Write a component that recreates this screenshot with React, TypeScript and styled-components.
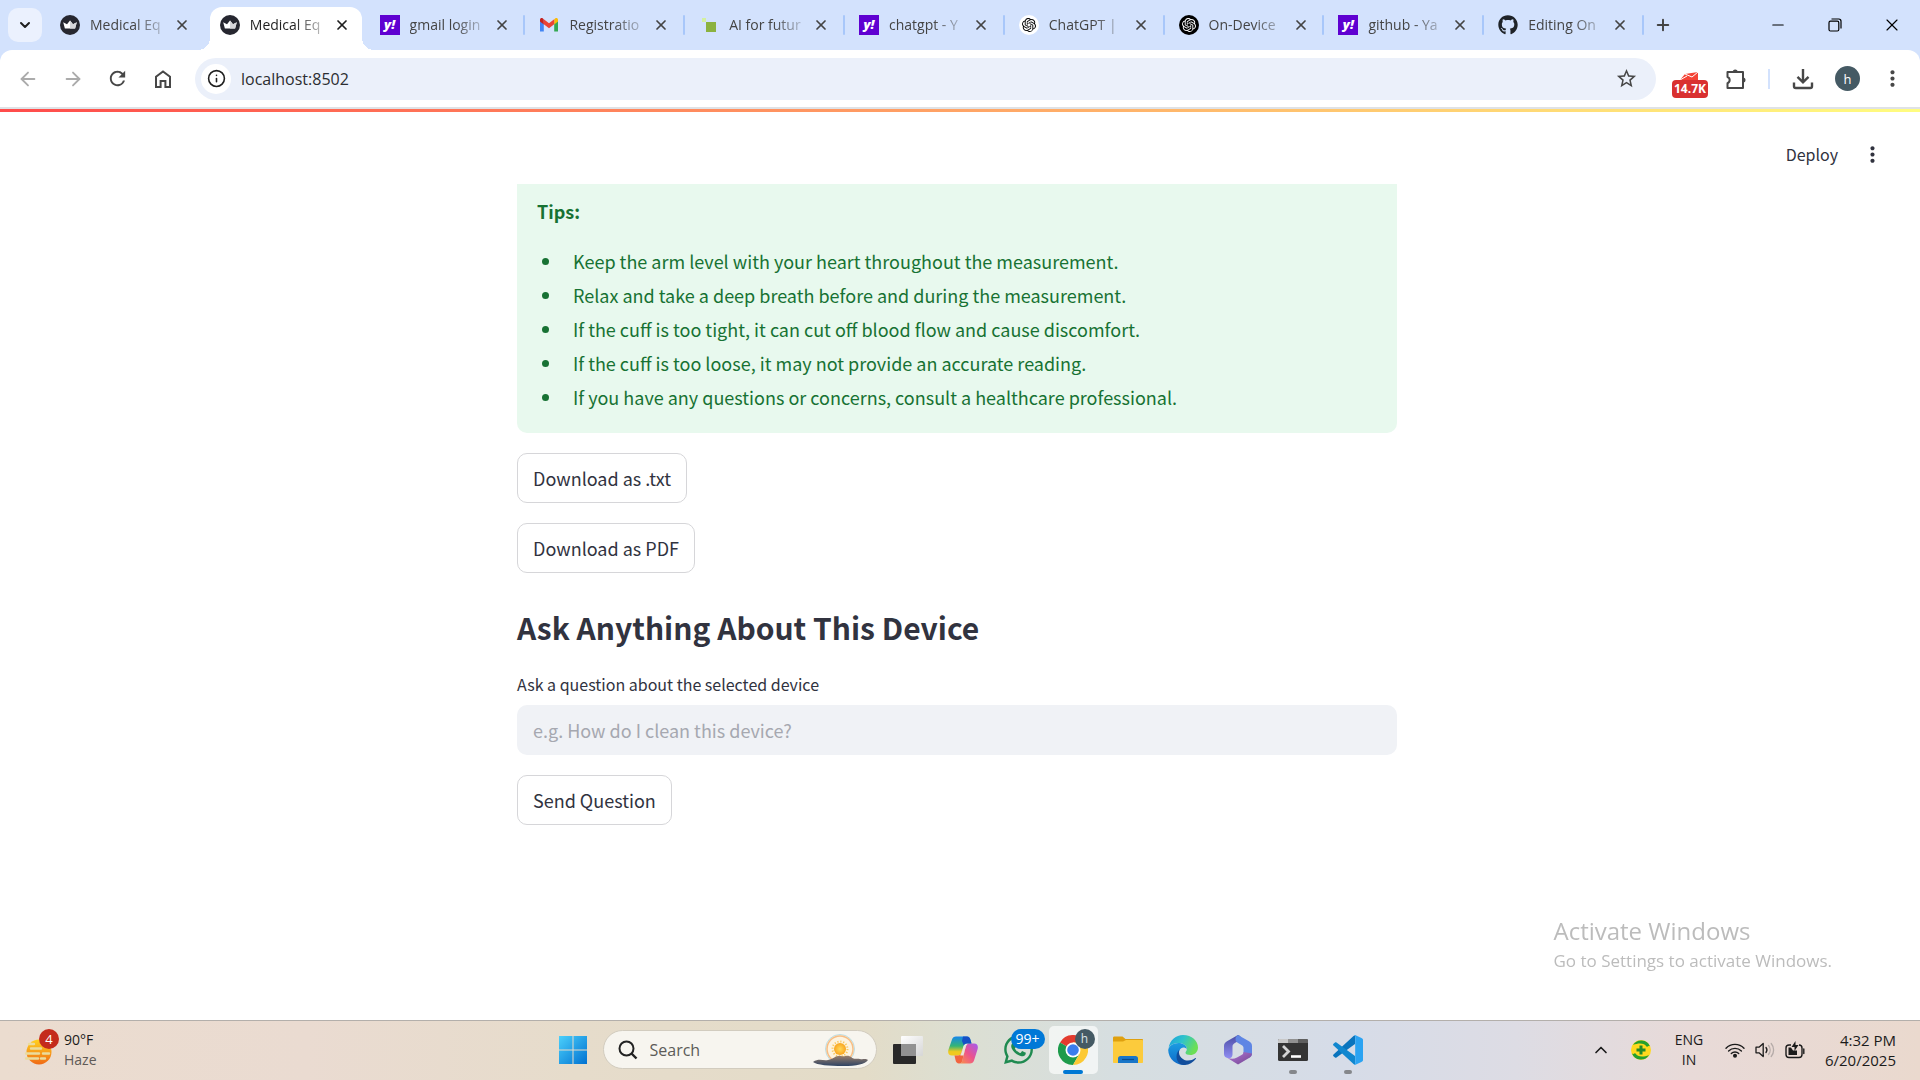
import React from "react";
import styled, { createGlobalStyle, css } from "styled-components";
import { FaGithub, FaWhatsapp } from "react-icons/fa";
import { SiOpenai } from "react-icons/si";
import { ArrowLeft, ArrowRight, ChevronDown, ChevronUp, Info, Minus, Plus, X } from "lucide-react";
import { MdMoreVert, MdRefresh, MdStarBorder } from "react-icons/md";

const systemFont = '"Open Sans", "Noto Sans", sans-serif';
const pageFont = '"Noto Sans CJK SC", "Noto Sans", sans-serif';

const GlobalStyle = createGlobalStyle`
  *, *::before, *::after { box-sizing: border-box; }
  body { margin: 0; background: #fff; }
  button, input { font: inherit; color: inherit; }
  button { border: 0; padding: 0; background: none; cursor: pointer; }
  svg { display: block; flex: none; }
`;

const Screen = styled.div`
  display: flex;
  flex-direction: column;
  height: 100vh;
  overflow: hidden;
  font-family: ${systemFont};
`;

/* ---------- Browser window ---------- */

const TabStrip = styled.header`
  display: flex;
  align-items: center;
  height: 50px;
  flex: none;
  padding-left: 8px;
  background: #d3e2fd;
  color: #444;
`;

const TabSearch = styled.button`
  display: grid;
  place-items: center;
  width: 34px;
  height: 34px;
  margin-right: 8px;
  border-radius: 10px;
  background: #ebf1fe;
  color: #1f1f1f;
`;

const Tabs = styled.nav`
  display: flex;
  flex: 0 1 1598px;
  min-width: 0;
  height: 50px;
  padding-top: 7px;
`;

const TabSlot = styled.div<{ $divider: boolean }>`
  flex: 1;
  display: flex;
  align-items: center;
  min-width: 0;
  padding-right: 4px;
  ${(p) =>
    p.$divider &&
    css`
      &::after {
        content: "";
        width: 2px;
        height: 20px;
        margin-left: auto;
        margin-bottom: 7px;
        border-radius: 1px;
        background: #a8c7fa;
      }
    `}
`;

const TabBody = styled.div<{ $active: boolean }>`
  position: relative;
  display: flex;
  align-items: center;
  flex: 0 1 152px;
  min-width: 0;
  height: 43px;
  padding: 0 10px 7px;
  border-radius: 12px 12px 0 0;
  ${(p) =>
    p.$active &&
    css`
      background: #fff;
      color: #1f1f1f;
      &::before,
      &::after {
        content: "";
        position: absolute;
        bottom: 0;
        width: 12px;
        height: 12px;
      }
      &::before {
        right: 100%;
        background: radial-gradient(circle at 0 0, transparent 12px, #fff 12px);
      }
      &::after {
        left: 100%;
        background: radial-gradient(circle at 100% 0, transparent 12px, #fff 12px);
      }
    `}
`;

const TabLabel = styled.button`
  display: flex;
  align-items: center;
  gap: 10px;
  flex: 1;
  min-width: 0;
  font-size: 14px;
  line-height: 20px;
`;

const TabTitle = styled.span`
  flex: 1;
  white-space: nowrap;
  text-align: left;
  mask-image: linear-gradient(to right, #000 60%, rgba(0, 0, 0, 0.2));
`;

const CloseTab = styled.button`
  display: grid;
  place-items: center;
  flex: none;
  width: 20px;
  height: 20px;
  margin-left: 8px;
`;

const NewTab = styled.button`
  display: grid;
  place-items: center;
  width: 34px;
  height: 34px;
  margin-left: -2px;
`;

const WindowControls = styled.div`
  display: flex;
  margin-left: auto;
  color: #000;
`;

const WindowButton = styled.button`
  display: grid;
  place-items: center;
  width: 57px;
  height: 50px;
`;

const ToolbarBack = styled.div`
  flex: none;
  background: #d3e2fd;
`;

const Toolbar = styled.div`
  display: flex;
  align-items: center;
  height: 57px;
  padding: 0 5px;
  border-radius: 12px 12px 0 0;
  background: #fff;
  color: #474747;
`;

const ToolButton = styled.button<{ $dim?: boolean }>`
  display: grid;
  place-items: center;
  width: 45px;
  height: 42px;
  color: ${(p) => (p.$dim ? "#ababab" : "#474747")};
`;

const AddressBar = styled.form`
  display: flex;
  align-items: center;
  flex: 1;
  height: 42px;
  margin: 0 11px 0 10px;
  padding: 0 7px 0 6px;
  border-radius: 21px;
  background: #ebf0fa;
`;

const SiteInfo = styled.button`
  display: grid;
  place-items: center;
  width: 30px;
  height: 30px;
  border-radius: 50%;
  background: #fff;
  color: #1f1f1f;
`;

const AddressInput = styled.input`
  flex: 1;
  min-width: 0;
  height: 30px;
  border: 0;
  outline: 0;
  padding: 0 10px;
  background: transparent;
  color: #2b2d31;
  font-size: 16px;
`;

const ToolDivider = styled.span`
  width: 2px;
  height: 20px;
  margin: 0 10px;
  background: #d3e2fd;
`;

const ProfileDot = styled.span`
  display: grid;
  place-items: center;
  width: 25px;
  height: 25px;
  border-radius: 50%;
  background: #455a64;
  color: #fff;
  font-size: 13px;
  line-height: 24px;
`;

const MailExtension = styled.button`
  display: flex;
  flex-direction: column;
  align-items: center;
  width: 46px;
  padding-top: 12px;
`;

const MailCount = styled.span`
  width: 36px;
  height: 18px;
  border-radius: 4px;
  background: #d93030;
  color: #fff;
  font-size: 12px;
  font-weight: 700;
  line-height: 18px;
`;

/* ---------- Streamlit page ---------- */

const Page = styled.main`
  display: flex;
  flex-direction: column;
  flex: 1;
  min-height: 0;
  overflow: hidden;
  border-top: 2px solid #dfe2e6;
  background: #fff;
  color: #31333f;
  font-family: ${pageFont};
`;

const Decoration = styled.div`
  flex: none;
  height: 3px;
  background: linear-gradient(90deg, #ff4b4b, #fffd80);
`;

const PageHeader = styled.div`
  display: flex;
  justify-content: flex-end;
  align-items: center;
  gap: 22px;
  flex: none;
  height: 72px;
  padding: 12px 35px 0 0;
`;

const DeployButton = styled.button`
  font-size: 16px;
  line-height: 24px;
`;

const Column = styled.div`
  display: flex;
  flex-direction: column;
  align-items: flex-start;
  gap: 20px;
  width: 100%;
  max-width: 886px;
  margin: 0 auto;
  padding-right: 6px;
`;

const TipsBox = styled.section`
  width: 100%;
  padding: 11px 20px 19px;
  border-radius: 0 0 10px 10px;
  background: #e8f9ee;
  color: #177233;
  font-size: 18px;
  line-height: 34px;
`;

const TipsTitle = styled.p`
  margin: 0 0 17px;
  line-height: 32px;
  font-weight: 600;
`;

const TipsList = styled.ul`
  margin: 0;
  padding-left: 26px;
`;

const Tip = styled.li`
  padding-left: 10px;
`;

const PageButton = styled.button`
  height: 50px;
  padding: 0 15px;
  border: 1px solid #d6d6d9;
  border-radius: 10px;
  background: #fff;
  font-size: 18px;
  line-height: 32px;
`;

const Heading = styled.h2`
  margin: 9px 0 0;
  font-size: 30px;
  font-weight: 600;
  line-height: 50px;
`;

const Field = styled.div`
  width: 100%;
`;

const FieldLabel = styled.label`
  display: block;
  margin-bottom: 9px;
  font-size: 16px;
  line-height: 24px;
`;

const FieldInput = styled.input`
  display: block;
  width: 100%;
  height: 50px;
  padding: 0 16px;
  border: 0;
  border-radius: 10px;
  background: #f0f2f6;
  font-size: 18px;
  &::placeholder {
    color: #a6a8b0;
    opacity: 1;
  }
`;

const Watermark = styled.aside`
  position: fixed;
  right: 88px;
  bottom: 107px;
  color: #bcbcbc;
  font-size: 17px;
  line-height: 24px;
  pointer-events: none;
`;

const WatermarkTitle = styled.div`
  font-size: 24px;
  line-height: 36px;
`;

/* ---------- Taskbar ---------- */

const Taskbar = styled.footer`
  display: grid;
  grid-template-columns: 1fr auto 1fr;
  align-items: center;
  flex: none;
  height: 60px;
  padding-bottom: 2px;
  border-top: 1px solid #b3afab;
  background: linear-gradient(
    90deg,
    #ebdccf 0%,
    #eadbd1 16%,
    #e6dccb 30%,
    #e3dcc8 45%,
    #dcdfd2 50%,
    #d6dee0 58%,
    #d6dce8 70%,
    #dddce4 79%,
    #e8dad8 88%,
    #ead9ce 100%
  );
  color: #1b1b1b;
  font-size: 15px;
  line-height: 20px;
`;

const Weather = styled.button`
  display: flex;
  align-items: center;
  gap: 8px;
  padding-left: 24px;
  text-align: left;
`;

const WeatherIcon = styled.span`
  position: relative;
  width: 32px;
  height: 42px;
  padding-top: 10px;
`;

const WeatherBadge = styled.span`
  position: absolute;
  top: 0;
  left: 15px;
  width: 20px;
  height: 20px;
  border-radius: 50%;
  background: #c42b1c;
  color: #fff;
  font-size: 13px;
  line-height: 20px;
  text-align: center;
`;

const SmallText = styled.span`
  display: block;
  font-size: 14px;
`;

const MutedText = styled(SmallText)`
  color: #5f5a57;
`;

const ClockText = styled.span`
  display: block;
`;

const Apps = styled.div`
  display: flex;
  align-items: center;
  padding-left: 1px;
`;

const AppButton = styled.button<{ $active?: boolean }>`
  position: relative;
  display: grid;
  place-items: center;
  width: 49px;
  height: 48px;
  margin: 0 3px;
  border-radius: 5px;
  background: ${(p) => (p.$active ? "rgba(255, 255, 255, 0.65)" : "none")};
`;

const RunningMark = styled.span<{ $active?: boolean }>`
  position: absolute;
  bottom: 0;
  width: ${(p) => (p.$active ? 20 : 8)}px;
  height: 4px;
  border-radius: 2px;
  background: ${(p) => (p.$active ? "#0078d4" : "#85878b")};
`;

const CountBadge = styled.span`
  position: absolute;
  top: 3px;
  left: 17px;
  width: 34px;
  height: 20px;
  border-radius: 10px;
  background: #0078d7;
  color: #fff;
  font-size: 14px;
  line-height: 20px;
`;

const ProfileBadge = styled.span`
  position: absolute;
  top: 3px;
  right: 3px;
  width: 20px;
  height: 20px;
  border-radius: 50%;
  background: #455a64;
  color: #dde3e6;
  font-size: 12px;
  line-height: 19px;
`;

const SearchBox = styled.label`
  display: flex;
  align-items: center;
  gap: 12px;
  width: 274px;
  height: 39px;
  margin: 0 4px 0 2px;
  padding: 0 7px 0 14px;
  border: 1px solid #d2ccbf;
  border-radius: 20px;
  background: #f7f5ef;
`;

const SearchInput = styled.input`
  flex: 1;
  min-width: 0;
  border: 0;
  outline: 0;
  padding: 0;
  background: transparent;
  font-size: 16px;
  &::placeholder {
    color: #5c5b58;
    opacity: 1;
  }
`;

const Tray = styled.div`
  display: flex;
  align-items: center;
  justify-content: flex-end;
  padding-right: 24px;
`;

const TrayButton = styled.button<{ $width: number }>`
  display: grid;
  place-items: center;
  width: ${(p) => p.$width}px;
  height: 48px;
`;

const Clock = styled.button`
  width: 83px;
  text-align: right;
`;

/* ---------- Favicons ---------- */

const RoundIcon = styled.span<{ $dark?: boolean }>`
  display: grid;
  place-items: center;
  flex: none;
  width: 20px;
  height: 20px;
  border-radius: 50%;
  background: ${(p) => (p.$dark ? "#000" : "#fff")};
  color: ${(p) => (p.$dark ? "#fff" : "#000")};
`;

const YahooIcon = styled.span`
  flex: none;
  width: 20px;
  height: 20px;
  background: #5f01d1;
  color: #fff;
  font-size: 13px;
  font-style: italic;
  font-weight: 800;
  line-height: 18px;
  text-align: center;
`;

const Crown = () => (
  <svg width="20" height="20" viewBox="0 0 20 20">
    <circle cx="10" cy="10" r="10" fill="#262730" />
    <path d="M3.2 7.3 7 9.2 10 5.6l3 3.6 3.8-1.9-1.7 6.2H4.9z" fill="#fff" />
    <path d="m10 5.6 3 3.6 3.8-1.9-1.7 6.2H10z" fill="#d6d6da" />
  </svg>
);

const Gmail = () => (
  <svg width="20" height="20" viewBox="0 0 20 20">
    <path d="M1 5.5v11h3.8V8.8z" fill="#4285f4" />
    <path d="M19 5.5v11h-3.8V8.8z" fill="#34a853" />
    <path d="M15.2 4.4v5L19 6.6V5c0-1.9-1.8-2.4-2.9-1.5z" fill="#fbbc04" />
    <path d="M4.8 4.4v5L1 6.6V5c0-1.9 1.8-2.4 2.9-1.5z" fill="#c5221f" />
    <path d="M4.8 4.2 10 8.2l5.2-4v5.1L10 13.2 4.8 9.3z" fill="#ea4335" />
  </svg>
);

const GreenSquares = () => (
  <svg width="20" height="20" viewBox="0 0 20 20">
    <path d="M3 3h4v4H3z" fill="#d3f0a0" />
    <path d="M7 7h10v10H7z" fill="#8bb23f" />
  </svg>
);

type Site = "streamlit" | "yahoo" | "gmail" | "green" | "chatgpt" | "openai" | "github";

function Favicon({ site }: { site: Site }) {
  switch (site) {
    case "streamlit":
      return <Crown />;
    case "yahoo":
      return <YahooIcon>y!</YahooIcon>;
    case "gmail":
      return <Gmail />;
    case "green":
      return <GreenSquares />;
    case "chatgpt":
      return <RoundIcon><SiOpenai size={14} /></RoundIcon>;
    case "openai":
      return <RoundIcon $dark><SiOpenai size={14} /></RoundIcon>;
    default:
      return <FaGithub size={20} color="#1f2328" />;
  }
}

/* ---------- Toolbar and taskbar drawings ---------- */

const HomeIcon = () => (
  <svg width="18" height="20" viewBox="0 0 18 20" fill="none" stroke="currentColor" strokeWidth="2">
    <path d="M2 18V7.8L9 2.4l7 5.4V18h-4.6v-6H6.6v6z" />
  </svg>
);

const PuzzleIcon = () => (
  <svg width="22" height="22" viewBox="0 0 22 22" fill="none" stroke="currentColor" strokeWidth="2" strokeLinejoin="round">
    <path d="M2.500 4h15.500v16H2.500v-4.800a3.300 3.300 0 0 0 0-6.200z" />
    <path d="M7.700 4a2.500 2.500 0 0 1 5 0zM18 9.500a2.500 2.500 0 0 1 0 5z" fill="currentColor" stroke="none" />
  </svg>
);

const DownloadIcon = () => (
  <svg width="22" height="22" viewBox="0 0 22 22" fill="none" stroke="currentColor" strokeWidth="2.400">
    <path d="M11 1v13M5.500 8.800 11 14.300l5.500-5.500M2 14.500v3.700c0 1 .8 1.800 1.800 1.800h14.400c1 0 1.800-.8 1.800-1.800v-3.700" />
  </svg>
);

const MailIcon = () => (
  <svg width="20" height="8" viewBox="0 0 20 8">
    <path d="M5 2 18 0v8H0z" fill="#f44336" />
    <path d="m5 2 7 3 6-5M0 8l7-4" stroke="#fff" strokeWidth="1" fill="none" />
  </svg>
);

const RestoreIcon = () => (
  <svg width="14" height="14" viewBox="0 0 14 14" fill="none" stroke="currentColor" strokeWidth="1.200">
    <rect x="1" y="3.200" width="9.800" height="9.800" rx="1.500" />
    <path d="M3.500 1h7.300C12.200 1 13 2 13 3.200v7.300" />
  </svg>
);

const HazeIcon = () => (
  <svg width="28" height="26" viewBox="0 0 28 26">
    <defs>
      <linearGradient id="haze" x1="0" y1="0" x2="0" y2="1">
        <stop offset="0" stopColor="#ffd21f" />
        <stop offset="1" stopColor="#f06a16" />
      </linearGradient>
    </defs>
    <circle cx="15" cy="13" r="12.500" fill="url(#haze)" />
    <g stroke="#eadc9d" strokeWidth="2.400" strokeLinecap="round">
      <path d="M5 5h5M2 14.500h13M19 14.500h6M7 9.500h10M2 19.500h12M17 19.500h4" />
    </g>
  </svg>
);

const StartIcon = () => (
  <svg width="30" height="30" viewBox="0 0 30 30">
    <defs>
      <linearGradient id="start" x1="0" y1="0" x2="1" y2="1">
        <stop offset="0" stopColor="#4bd0fb" />
        <stop offset="1" stopColor="#0071d1" />
      </linearGradient>
    </defs>
    <path d="M1 1h13.500v13.500H1zM15.500 1H29v13.500H15.500zM1 15.500h13.500V29H1zM15.500 15.500H29V29H15.500z" fill="url(#start)" />
  </svg>
);

const SearchIcon = () => (
  <svg width="20" height="20" viewBox="0 0 20 20" fill="none" stroke="#222" strokeWidth="2">
    <circle cx="8.500" cy="8.500" r="7" />
    <path d="m13.500 13.500 5 5" strokeWidth="2.400" />
  </svg>
);

const SunriseArt = () => (
  <svg width="56" height="34" viewBox="0 0 56 34">
    <defs>
      <radialGradient id="sun">
        <stop offset="0" stopColor="#ffd95a" />
        <stop offset="1" stopColor="#f9a51f" />
      </radialGradient>
      <linearGradient id="hill" x1="0" y1="0" x2="0" y2="1">
        <stop offset="0" stopColor="#9a7f6b" />
        <stop offset="1" stopColor="#2f4464" />
      </linearGradient>
    </defs>
    <circle cx="27" cy="16" r="14.500" fill="#fdf3df" stroke="#b9dce4" />
    <circle cx="27" cy="16" r="13" fill="none" stroke="#f7bd85" strokeWidth="1.500" />
    <circle cx="27" cy="16" r="7.500" fill="none" stroke="#f8c95e" strokeWidth="2" strokeDasharray="1.200 1.750" />
    <circle cx="27" cy="16" r="6" fill="url(#sun)" />
    <path d="M0 29c6-4 10-1 15-2 6-1 8-5 13-4s6-2 10 1 5 1 9 2c3 1 5-1 8 1-3 4-11 6-25 6S4 32 0 29z" fill="url(#hill)" />
  </svg>
);

const TaskViewIcon = () => (
  <svg width="30" height="28" viewBox="0 0 30 28">
    <defs>
      <linearGradient id="pane" x1="0" y1="0" x2="1" y2="1">
        <stop offset="0" stopColor="#fff" />
        <stop offset="1" stopColor="#d6d6d6" />
      </linearGradient>
    </defs>
    <rect x="0" y="8" width="23" height="20" rx="1" fill="#292929" />
    <rect x="8" y="0" width="22" height="20" rx="1" fill="url(#pane)" />
    <path d="M8 8h15v12H8z" fill="#929292" />
  </svg>
);

const CopilotIcon = () => (
  <svg width="30" height="28" viewBox="0 0 30 28">
    <defs>
      <linearGradient id="copA" x1="0" y1="0" x2="0" y2="1">
        <stop offset="0" stopColor="#1686ec" />
        <stop offset=".5" stopColor="#34b575" />
        <stop offset=".8" stopColor="#f0ca1e" />
      </linearGradient>
      <linearGradient id="copB" x1="1" y1="0" x2="0" y2="1">
        <stop offset="0" stopColor="#a25bf2" />
        <stop offset=".5" stopColor="#ec538d" />
        <stop offset="1" stopColor="#fb9545" />
      </linearGradient>
    </defs>
    <path d="M8 .5h11c2 0 3 1.500 3.500 3.500l1 3.500H19c-2 0-3 1-3.500 3l-2 6c-.5 2-1.500 3-3.500 3H4c-3.500 0-4.500-2.500-3.500-6L4 3.500c.6-2 2-3 4-3z" fill="url(#copA)" />
    <path d="M22 27.500H11c2 0 3-1 3.500-3.500l3-12.500c.5-2 1.500-4 3.500-4h5c3.500 0 4.500 2.500 3.500 6L26 24.500c-.6 2-2 3-4 3z" fill="url(#copB)" />
    <path d="M6.500 19.500H10c2 0 3-1 3.500-3l1-3 2.500-.5-2.500 11c-.5 2.500-1.500 3.500-3.500 3.500-2 0-3-1.500-3.500-3.500z" fill="#f2643f" />
    <path d="m13.500 16.500 2-6c.5-2 1.500-3 3.500-3h2c-2 0-3 2-3.500 4l-2 8h-3.200z" fill="#e9e6dc" />
    <path d="M15 .5h4c2 0 3 1.500 3.500 3.500l1 3.500H19c-1.600 0-2.600.7-3.200 2L14 5z" fill="#1650c5" />
  </svg>
);

const ChromeIcon = () => (
  <svg width="30" height="30" viewBox="0 0 30 30">
    <path d="M15 15 2 7.500A15 15 0 0 1 28 7.500H15z" fill="#e33b2e" />
    <path d="M15 15 2 7.500A15 15 0 0 0 15 30l6.500-11.300z" fill="#1d9b4b" />
    <path d="m15 15 6.500 3.700L15 30A15 15 0 0 0 28 7.500H15z" fill="#fcc934" />
    <circle cx="15" cy="15" r="7.500" fill="#fff" />
    <circle cx="15" cy="15" r="5.800" fill="#3b7ded" />
  </svg>
);

const FolderIcon = () => (
  <svg width="30" height="28" viewBox="0 0 30 28">
    <path d="M0 2c0-1 .5-1.500 1.500-1.500h8L12.500 3H29c.6 0 1 .4 1 1v8H0z" fill="#dfa00f" />
    <path d="M0 5.500h10L13 4h16c.6 0 1 .4 1 1v21c0 .6-.4 1-1 1H1c-.6 0-1-.4-1-1z" fill="#fccb3c" />
    <path d="M5 27v-4.500C5 21 6 20 7.500 20h15c1.500 0 2.500 1 2.500 2.500V27z" fill="#1976c8" />
    <path d="M9 23.500h12" stroke="#0b4c8c" strokeWidth="1.200" />
  </svg>
);

const EdgeIcon = () => (
  <svg width="30" height="30" viewBox="0 0 30 30">
    <defs>
      <linearGradient id="edgeTop" x1="0" y1="0" x2="1" y2=".4">
        <stop offset="0" stopColor="#1a9ee0" />
        <stop offset=".5" stopColor="#2fc3cb" />
        <stop offset="1" stopColor="#6bdf55" />
      </linearGradient>
      <linearGradient id="edgeSide" x1="0" y1="0" x2="0" y2="1">
        <stop offset="0" stopColor="#1b9de2" />
        <stop offset="1" stopColor="#0f6ac8" />
      </linearGradient>
    </defs>
    <path d="M.5 13C2 5 8 0 15 0c9 0 15 6 15 12.500 0 5-4 7.500-7.500 7.500-3 0-5-1-5-2.300 0-1 1.300-1.400 1.300-3.700C18.800 10.500 15 8 11 8 6 8 2 10 .5 13z" fill="url(#edgeTop)" />
    <path d="M.2 15C1 11 5 8 10.500 8c4.500 0 8.300 2.600 8.300 6-1.600-1.800-4-2-5.600-.8C9 16 10 24 17 27.500c1.500.8 2 1.500.5 2A15 15 0 0 1 .2 15z" fill="url(#edgeSide)" />
    <path d="M11.500 14.500C9.500 20 14 25.500 20 25.500c3 0 5-1 7-2.300.8-.4 1.200.1.700.9A15 15 0 0 1 15 30C8 29 6.500 19 11.500 14.500z" fill="#124e9c" />
  </svg>
);

const OfficeIcon = () => (
  <svg width="28" height="30" viewBox="0 0 28 30">
    <defs>
      <linearGradient id="offA" x1="0" y1="0" x2="0" y2="1">
        <stop offset="0" stopColor="#4a4ca4" />
        <stop offset="1" stopColor="#8f8cf1" />
      </linearGradient>
      <linearGradient id="offB" x1="0" y1="0" x2="1" y2="1">
        <stop offset="0" stopColor="#b377d8" />
        <stop offset="1" stopColor="#72458f" />
      </linearGradient>
    </defs>
    <path d="M14 0 3 6.300C1 7.500 0 9 0 11v8c0 2.500 1.500 3.600 3.500 4 3 .6 5-.7 5-3.500v-8c0-1.500.7-2.500 2-3.300L16 5c1.500-1 1.500-4-2-5z" fill="url(#offA)" />
    <path d="M14 0c-1.600 1-2.500 2-2.500 4 0 2.200 1.300 3.300 3 4.200l3 1.700c1.200.7 2 1.600 2 3v6L25 23c2-1.200 3-2.700 3-4.500V11c0-2-1-3.500-3-4.700z" fill="#5f86e4" />
    <path d="M3.500 23 14 29.500 25 23c2-1.200 3-2.700 3-4.500l-8.500-1.600c0 1.500-.8 2.500-2 3.200L13 22.500c-3 1.600-6 1.500-9.500.5z" fill="url(#offB)" />
  </svg>
);

const TerminalIcon = () => (
  <svg width="30" height="24" viewBox="0 0 30 24">
    <rect y="1" width="30" height="22" rx="1.500" fill="#353535" />
    <path d="M0 5V2.500C0 1.700.7 1 1.500 1H10v4z" fill="#c9c9c9" />
    <path d="M10 1h10v4H10z" fill="#919191" />
    <path d="M20 1h8.500c.8 0 1.500.7 1.500 1.500V5H20z" fill="#5f5f5f" />
    <path d="m5 8 5.500 5.500L5 19" fill="none" stroke="#d5d5d5" strokeWidth="2.800" />
    <path d="M13 18.500h10" stroke="#fff" strokeWidth="2.600" />
  </svg>
);

const CodeIcon = () => (
  <svg width="30" height="30" viewBox="0 0 30 30">
    <path d="M22 9 3.500 22.500c-.6.4-1 .4-1.500 0l-1.500-1.300c-.6-.6-.6-1.200 0-1.700L20.500 1l1.500-.5z" fill="#0a74bd" />
    <path d="M22 21 3.500 7.500c-.6-.4-1-.4-1.500 0L.5 8.800c-.6.600-.6 1.200 0 1.700L20.500 29l1.500.5z" fill="#1187cf" />
    <path d="M22 0c-.6 0-1.200.4-1.600.8.900-.5 1.800 0 1.800 1v26.400c0 1-.9 1.500-1.800 1 .5.600 1.200.9 2 .6l6-2.800c1-.5 1.600-1 1.600-2V5c0-1-.6-1.500-1.500-2z" fill="#2ba3f2" />
  </svg>
);

const ShieldIcon = () => (
  <svg width="20" height="20" viewBox="0 0 20 20">
    <circle cx="10" cy="10" r="10" fill="#ffd91e" />
    <path d="M2 5A9.500 9.500 0 0 1 19 6.500c-1-.8-2-.5-3 .5-2.500-4-8-4.500-14-2zM18 15A9.500 9.500 0 0 1 1 13.500c1 .8 2 .5 3-.5 2.500 4 8 4.500 14 2z" fill="#25a02e" />
    <path d="M8.500 5.500h3v3h3v3h-3v3h-3v-3h-3v-3h3z" fill="#238a27" />
  </svg>
);

const WifiIcon = () => (
  <svg width="20" height="16" viewBox="0 0 20 16" fill="none" stroke="currentColor" strokeWidth="1.400" strokeLinecap="round">
    <path d="M1 6.200a12.500 12.500 0 0 1 18 0M3.600 9a9 9 0 0 1 12.800 0M6.300 11.500a5.300 5.300 0 0 1 7.400 0" />
    <circle cx="10" cy="13.800" r="1.300" fill="currentColor" />
  </svg>
);

const SpeakerIcon = () => (
  <svg width="20" height="16" viewBox="0 0 20 16" fill="none" stroke="currentColor" strokeWidth="1.300" strokeLinecap="round" strokeLinejoin="round">
    <path d="M1 5.200v5.600h3L8.200 14.500v-13L4 5.200zM11 5.500a4 4 0 0 1 0 5" />
    <path d="M13.500 3.500a7 7 0 0 1 0 9M16.200 1.500a10 10 0 0 1 0 13" stroke="#b5aba8" />
  </svg>
);

const BatteryIcon = () => (
  <svg width="20" height="18" viewBox="0 0 20 18" fill="none" stroke="currentColor" strokeWidth="1.400" strokeLinejoin="round">
    <path d="M6 4H4C2 4 1 5 1 7v6.500c0 2 1 3 3 3h10c2 0 3-1 3-3V7c0-2-1-3-3-3" />
    <path d="M18.800 8v4.500" strokeLinecap="round" />
    <path d="M3.500 6.500H6L8 9.500h4V14H3.500z" fill="currentColor" stroke="none" />
    <path d="M10.500 0 6.500 6h3v4l4-6h-3z" fill="currentColor" stroke="none" />
  </svg>
);

/* ---------- Data ---------- */

const tabs: { title: string; site: Site; active?: boolean }[] = [
  { title: "Medical Eq", site: "streamlit" },
  { title: "Medical Eq", site: "streamlit", active: true },
  { title: "gmail login", site: "yahoo" },
  { title: "Registratio", site: "gmail" },
  { title: "AI for futur", site: "green" },
  { title: "chatgpt - Y", site: "yahoo" },
  { title: "ChatGPT |", site: "chatgpt" },
  { title: "On-Device", site: "openai" },
  { title: "github - Ya", site: "yahoo" },
  { title: "Editing On", site: "github" },
];

const tips = [
  "Keep the arm level with your heart throughout the measurement.",
  "Relax and take a deep breath before and during the measurement.",
  "If the cuff is too tight, it can cut off blood flow and cause discomfort.",
  "If the cuff is too loose, it may not provide an accurate reading.",
  "If you have any questions or concerns, consult a healthcare professional.",
];

function BrowserTab({ title, site, active = false, divider }: { title: string; site: Site; active?: boolean; divider: boolean }) {
  return (
    <TabSlot $divider={divider}>
      <TabBody $active={active}>
        <TabLabel>
          <Favicon site={site} />
          <TabTitle>{title}</TabTitle>
        </TabLabel>
        <CloseTab aria-label="Close tab">
          <X size={16} strokeWidth={2.6} />
        </CloseTab>
      </TabBody>
    </TabSlot>
  );
}

export default function App() {
  return (
    <Screen>
      <GlobalStyle />
      <TabStrip>
        <TabSearch aria-label="Search tabs"><ChevronDown size={16} strokeWidth={3} /></TabSearch>
        <Tabs aria-label="Open tabs">
          {tabs.map((tab, i) => (
            <BrowserTab key={i} {...tab} divider={i > 1} />
          ))}
        </Tabs>
        <NewTab aria-label="New tab"><Plus size={18} strokeWidth={2.6} /></NewTab>
        <WindowControls>
          <WindowButton aria-label="Minimize"><Minus size={18} strokeWidth={1.4} /></WindowButton>
          <WindowButton aria-label="Restore"><RestoreIcon /></WindowButton>
          <WindowButton aria-label="Close"><X size={20} strokeWidth={1.4} /></WindowButton>
        </WindowControls>
      </TabStrip>

      <ToolbarBack>
        <Toolbar>
          <ToolButton $dim aria-label="Back"><ArrowLeft size={22} /></ToolButton>
          <ToolButton $dim aria-label="Forward"><ArrowRight size={22} /></ToolButton>
          <ToolButton aria-label="Reload"><MdRefresh size={23} /></ToolButton>
          <ToolButton aria-label="Home"><HomeIcon /></ToolButton>
          <AddressBar>
            <SiteInfo type="button" aria-label="Site information"><Info size={19} /></SiteInfo>
            <AddressInput aria-label="Address" defaultValue="localhost:8502" />
            <ToolButton type="button" aria-label="Bookmark"><MdStarBorder size={23} /></ToolButton>
          </AddressBar>
          <MailExtension aria-label="Unread mail"><MailIcon /><MailCount>14.7K</MailCount></MailExtension>
          <ToolButton aria-label="Extensions"><PuzzleIcon /></ToolButton>
          <ToolDivider />
          <ToolButton aria-label="Downloads"><DownloadIcon /></ToolButton>
          <ToolButton aria-label="Profile"><ProfileDot>h</ProfileDot></ToolButton>
          <ToolButton aria-label="Menu"><MdMoreVert size={25} /></ToolButton>
        </Toolbar>
      </ToolbarBack>

      <Page>
        <Decoration />
        <PageHeader>
          <DeployButton>Deploy</DeployButton>
          <button aria-label="Page menu"><MdMoreVert size={25} /></button>
        </PageHeader>
        <Column>
          <TipsBox>
            <TipsTitle>Tips:</TipsTitle>
            <TipsList>
              {tips.map((tip) => (
                <Tip key={tip}>{tip}</Tip>
              ))}
            </TipsList>
          </TipsBox>
          <PageButton>Download as .txt</PageButton>
          <PageButton>Download as PDF</PageButton>
          <Heading>Ask Anything About This Device</Heading>
          <Field>
            <FieldLabel htmlFor="question">Ask a question about the selected device</FieldLabel>
            <FieldInput id="question" placeholder="e.g. How do I clean this device?" />
          </Field>
          <PageButton>Send Question</PageButton>
        </Column>
      </Page>

      <Watermark>
        <WatermarkTitle>Activate Windows</WatermarkTitle>
        Go to Settings to activate Windows.
      </Watermark>

      <Taskbar>
        <Weather>
          <WeatherIcon><HazeIcon /><WeatherBadge>4</WeatherBadge></WeatherIcon>
          <span><SmallText>90°F</SmallText><MutedText>Haze</MutedText></span>
        </Weather>
        <Apps>
          <AppButton aria-label="Start"><StartIcon /></AppButton>
          <SearchBox>
            <SearchIcon />
            <SearchInput placeholder="Search" aria-label="Search" />
            <SunriseArt />
          </SearchBox>
          <AppButton aria-label="Task view"><TaskViewIcon /></AppButton>
          <AppButton aria-label="Copilot"><CopilotIcon /></AppButton>
          <AppButton aria-label="WhatsApp"><FaWhatsapp size={33} color="#1f8a50" /><CountBadge>99+</CountBadge></AppButton>
          <AppButton $active aria-label="Chrome"><ChromeIcon /><ProfileBadge>h</ProfileBadge><RunningMark $active /></AppButton>
          <AppButton aria-label="File Explorer"><FolderIcon /></AppButton>
          <AppButton aria-label="Edge"><EdgeIcon /></AppButton>
          <AppButton aria-label="Microsoft 365"><OfficeIcon /></AppButton>
          <AppButton aria-label="Terminal"><TerminalIcon /><RunningMark /></AppButton>
          <AppButton aria-label="Visual Studio Code"><CodeIcon /><RunningMark /></AppButton>
        </Apps>
        <Tray>
          <TrayButton $width={40} aria-label="Hidden icons"><ChevronUp size={20} strokeWidth={2} /></TrayButton>
          <TrayButton $width={40} aria-label="Antivirus"><ShieldIcon /></TrayButton>
          <TrayButton $width={56}><span><SmallText>ENG</SmallText><SmallText>IN</SmallText></span></TrayButton>
          <TrayButton $width={36} aria-label="Network"><WifiIcon /></TrayButton>
          <TrayButton $width={24} aria-label="Volume"><SpeakerIcon /></TrayButton>
          <TrayButton $width={36} aria-label="Battery"><BatteryIcon /></TrayButton>
          <Clock><ClockText>4:32 PM</ClockText><ClockText>6/20/2025</ClockText></Clock>
        </Tray>
      </Taskbar>
    </Screen>
  );
}
